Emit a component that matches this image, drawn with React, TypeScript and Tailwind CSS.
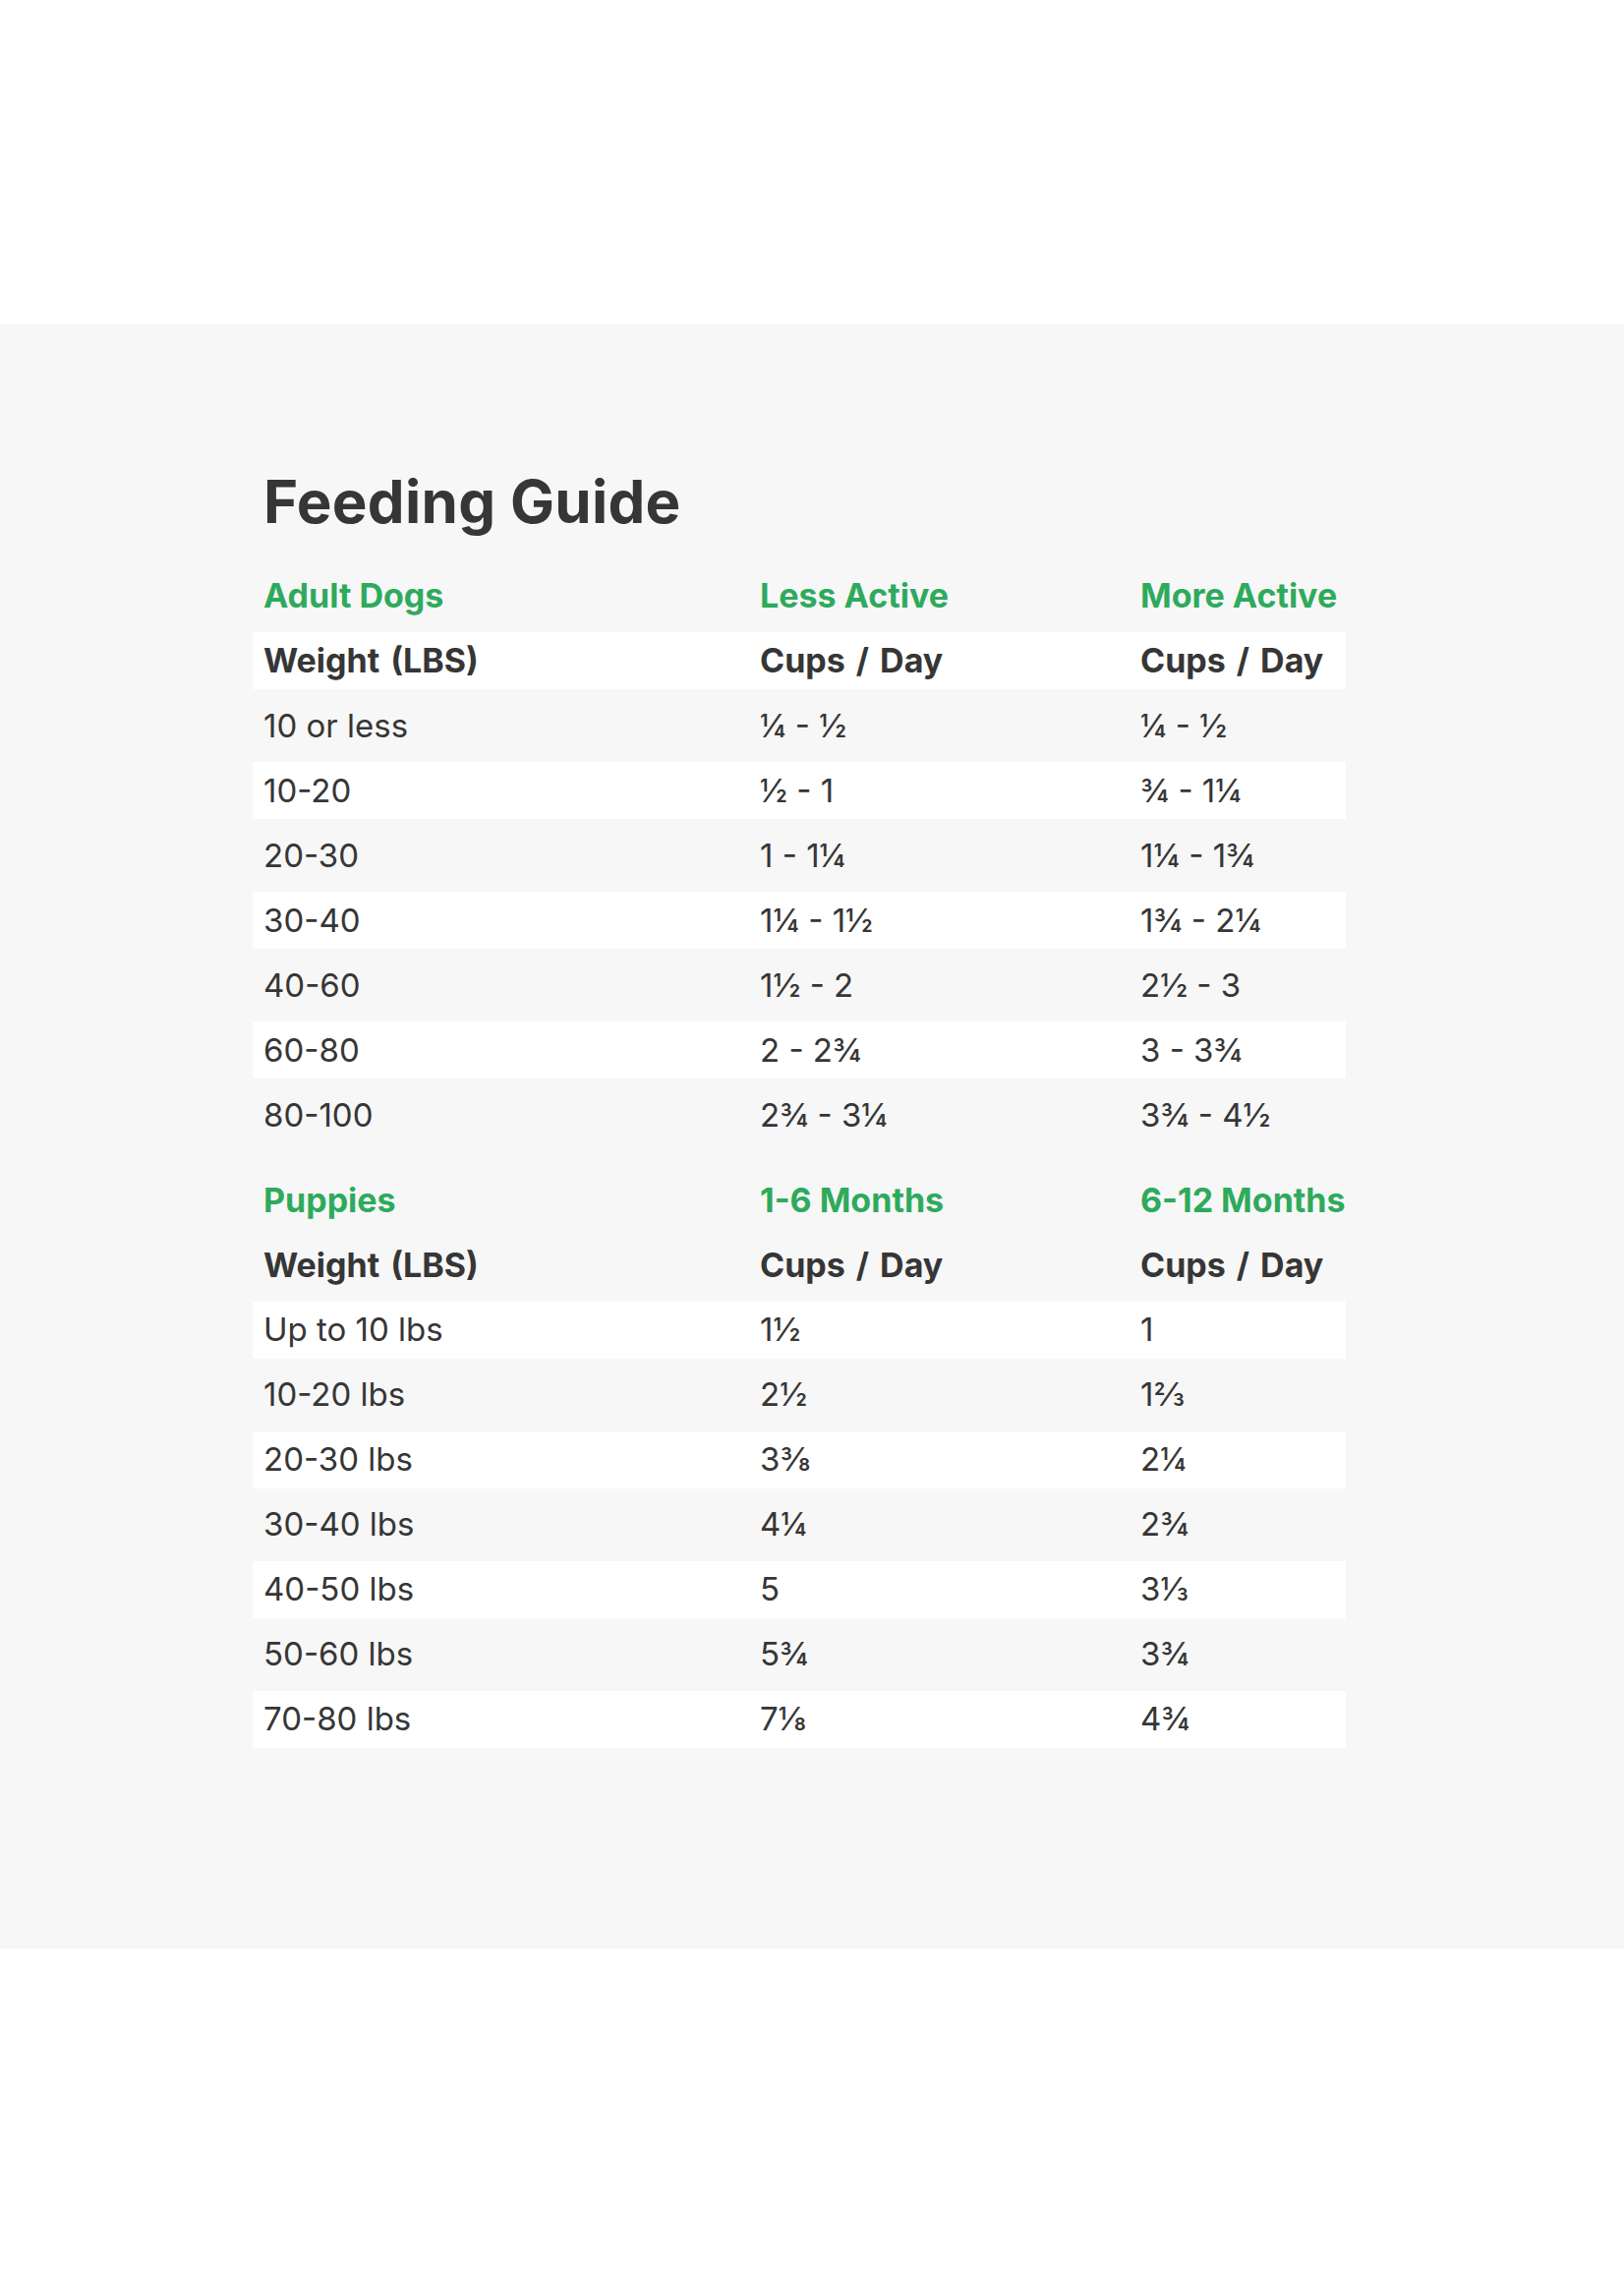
import React from 'react'

type Row = [string, string, string]

const adult: Row[] = [
  ['10 or less', '¼ - ½', '¼ - ½'],
  ['10-20', '½ - 1', '¾ - 1¼'],
  ['20-30', '1 - 1¼', '1¼ - 1¾'],
  ['30-40', '1¼ - 1½', '1¾ - 2¼'],
  ['40-60', '1½ - 2', '2½ - 3'],
  ['60-80', '2 - 2¾', '3 - 3¾'],
  ['80-100', '2¾ - 3¼', '3¾ - 4½'],
]

const puppies: Row[] = [
  ['Up to 10 lbs', '1½', '1'],
  ['10-20 lbs', '2½', '1⅔'],
  ['20-30 lbs', '3⅜', '2¼'],
  ['30-40 lbs', '4¼', '2¾'],
  ['40-50 lbs', '5', '3⅓'],
  ['50-60 lbs', '5¾', '3¾'],
  ['70-80 lbs', '7⅛', '4¾'],
]

function Line({ cells, white, className }: { cells: Row; white?: boolean; className: string }) {
  return (
    <div className={`flex h-[58px] items-center pl-[11px] leading-none whitespace-nowrap ${white ? 'bg-white' : ''} ${className}`}>
      <div className="w-[505px]">{cells[0]}</div>
      <div className="w-[387px]">{cells[1]}</div>
      <div>{cells[2]}</div>
    </div>
  )
}

function Section({ label, rows, headerWhite }: { label: Row; rows: Row[]; headerWhite: boolean }) {
  return (
    <div className="flex flex-col gap-2">
      <Line cells={label} className="text-[34px] font-bold text-[#2eaa5c]" />
      <Line
        cells={['Weight (LBS)', 'Cups / Day', 'Cups / Day']}
        white={headerWhite}
        className="text-[34px] font-bold text-[#363636] [word-spacing:3px]"
      />
      {rows.map((r, i) => (
        <Line
          key={r[0]}
          cells={r}
          white={headerWhite ? i % 2 === 1 : i % 2 === 0}
          className="text-[33px] font-normal text-[#363636]"
        />
      ))}
    </div>
  )
}

function App(): JSX.Element {
  return (
    <div className="min-h-screen bg-white font-['Inter','Liberation_Sans',sans-serif]">
      <div className="h-[330px]" />
      <section className="h-[1652px] bg-[#f7f7f7] pt-[150px]">
        <div className="ml-[257px] w-[1112px]">
          <h1 className="pl-[11px] text-[60px] leading-none font-bold tracking-[0.3px] text-[#363636]">Feeding Guide</h1>
          <div className="mt-[37px]">
            <Section label={['Adult Dogs', 'Less Active', 'More Active']} rows={adult} headerWhite />
          </div>
          <div className="mt-[28.5px]">
            <Section label={['Puppies', '1-6 Months', '6-12 Months']} rows={puppies} headerWhite={false} />
          </div>
        </div>
      </section>
      <div className="h-[331px]" />
    </div>
  )
}

export default App
